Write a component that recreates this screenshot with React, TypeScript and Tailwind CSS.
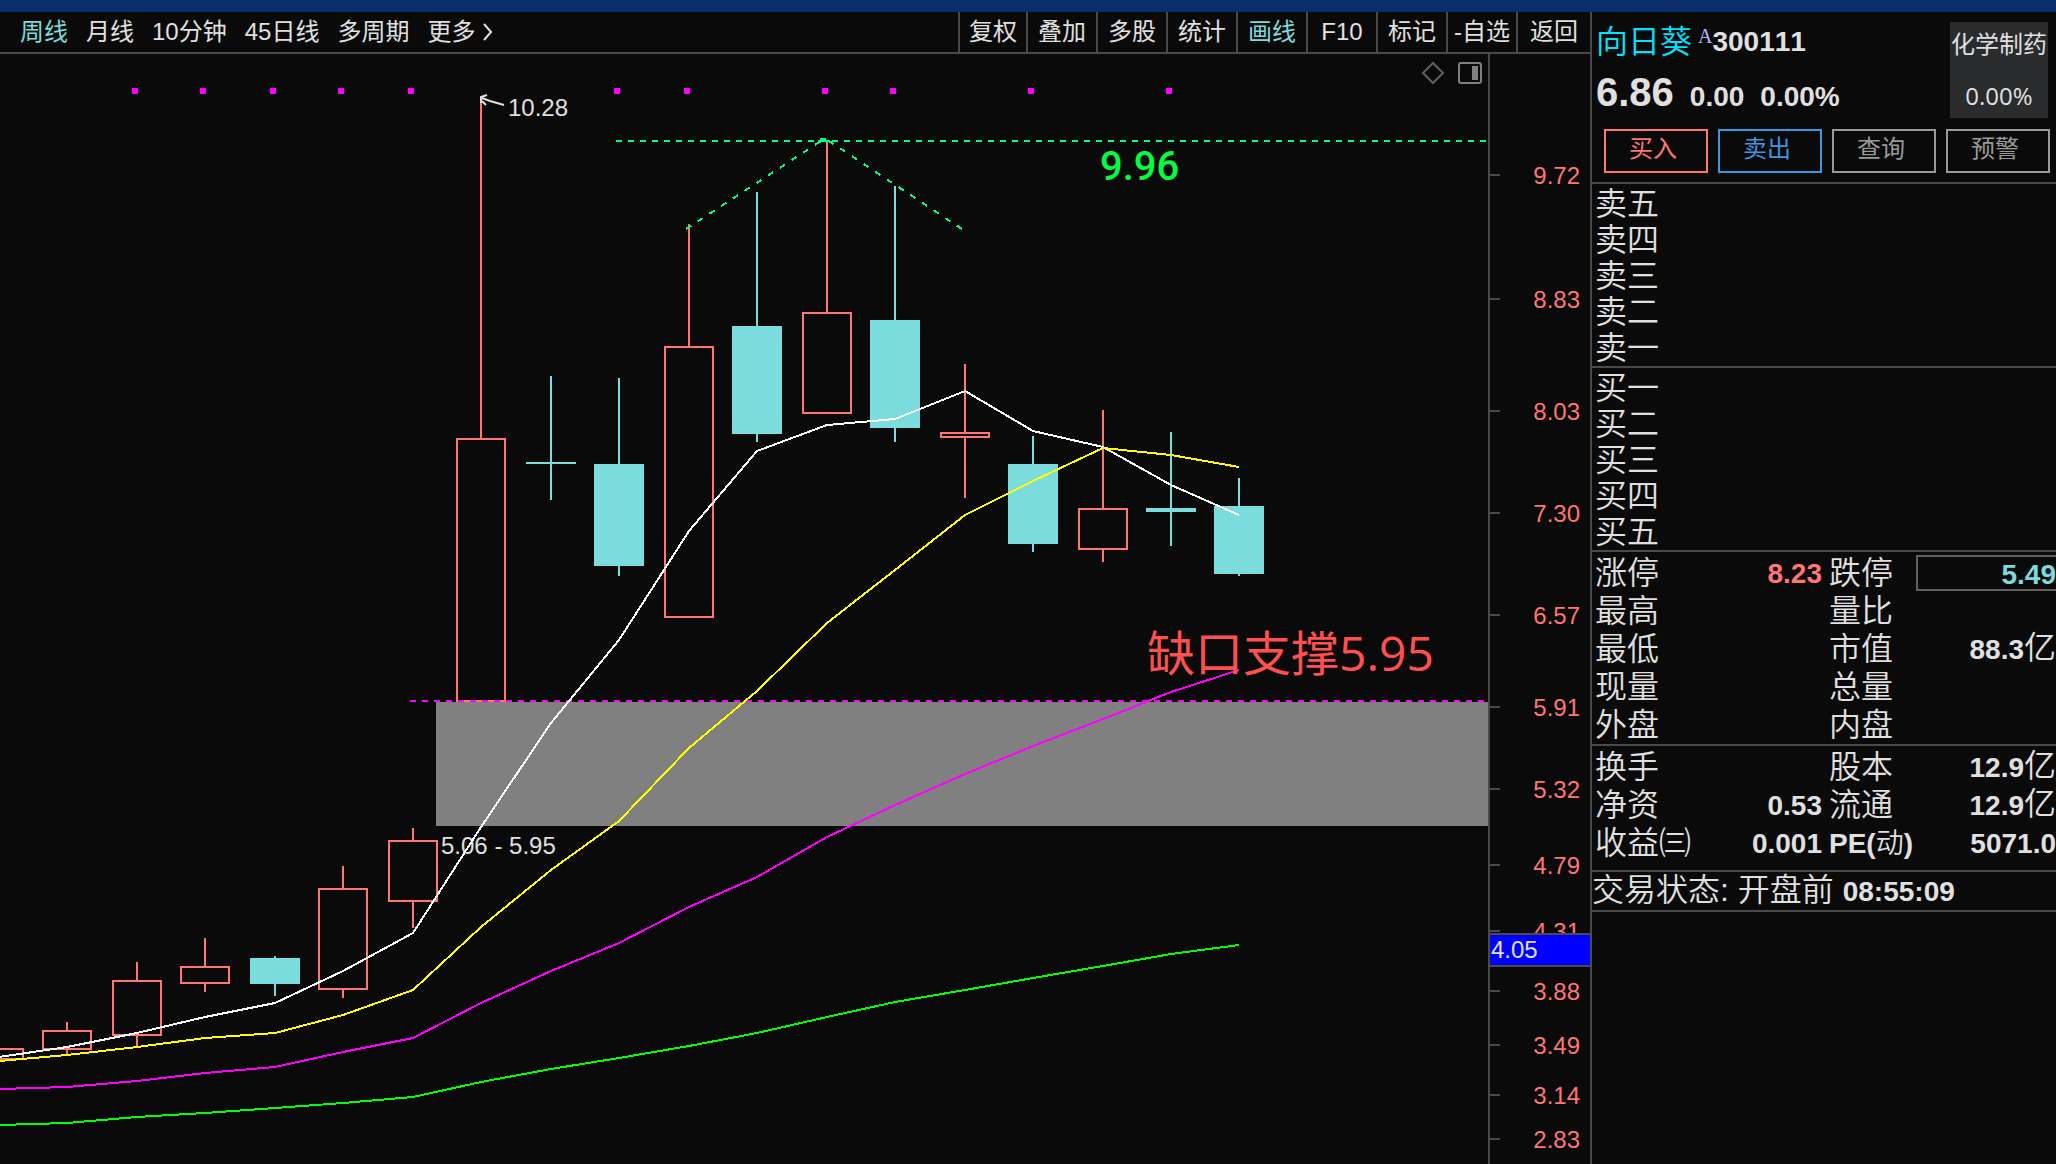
import { useState } from "react"

type Candle = {
  x: number
  high: number
  top: number
  bottom: number
  low: number
  up: boolean
}

const periods = ["周线", "月线", "10分钟", "45日线", "多周期", "更多"]
const tools = ["复权", "叠加", "多股", "统计", "画线", "F10", "标记", "-自选", "返回"]

const candles: Candle[] = [
  { x: -1, high: 1048, top: 1048, bottom: 1060, low: 1060, up: true },
  { x: 67, high: 1022, top: 1030, bottom: 1050, low: 1055, up: true },
  { x: 137, high: 962, top: 980, bottom: 1036, low: 1047, up: true },
  { x: 205, high: 938, top: 966, bottom: 984, low: 992, up: true },
  { x: 275, high: 956, top: 958, bottom: 984, low: 996, up: false },
  { x: 343, high: 866, top: 888, bottom: 990, low: 998, up: true },
  { x: 413, high: 828, top: 840, bottom: 902, low: 928, up: true },
  { x: 481, high: 102, top: 438, bottom: 702, low: 702, up: true },
  { x: 551, high: 376, top: 462, bottom: 464, low: 500, up: false },
  { x: 619, high: 378, top: 464, bottom: 566, low: 576, up: false },
  { x: 689, high: 224, top: 346, bottom: 618, low: 618, up: true },
  { x: 757, high: 192, top: 326, bottom: 434, low: 442, up: false },
  { x: 827, high: 142, top: 312, bottom: 414, low: 414, up: true },
  { x: 895, high: 186, top: 320, bottom: 428, low: 442, up: false },
  { x: 965, high: 364, top: 432, bottom: 438, low: 498, up: true },
  { x: 1033, high: 436, top: 464, bottom: 544, low: 552, up: false },
  { x: 1103, high: 410, top: 508, bottom: 550, low: 562, up: true },
  { x: 1171, high: 432, top: 508, bottom: 512, low: 546, up: false },
  { x: 1239, high: 478, top: 506, bottom: 574, low: 576, up: false },
]

// one y value per candle
const averages = [
  { color: "#ffffff", ys: [1057, 1047, 1033, 1017, 1003, 971, 933, 827, 723, 640, 531, 451, 425, 419, 391, 431, 447, 485, 515] },
  { color: "#ffff00", ys: [1061, 1055, 1047, 1038, 1033, 1015, 990, 927, 870, 821, 748, 691, 623, 570, 515, 481, 448, 455, 467] },
  { color: "#ff00ff", ys: [1089, 1087, 1081, 1073, 1067, 1052, 1038, 1003, 971, 943, 907, 877, 837, 805, 774, 746, 719, 692, 670] },
  { color: "#00ff00", ys: [1125, 1123, 1117, 1113, 1108, 1103, 1097, 1082, 1069, 1058, 1046, 1033, 1017, 1002, 990, 978, 966, 954, 945] },
]

const signals = [135, 203, 273, 341, 411, 617, 687, 825, 893, 1031, 1169]

const axis = [
  { label: "9.72", y: 175 },
  { label: "8.83", y: 299 },
  { label: "8.03", y: 411 },
  { label: "7.30", y: 513 },
  { label: "6.57", y: 615 },
  { label: "5.91", y: 707 },
  { label: "5.32", y: 789 },
  { label: "4.79", y: 865 },
  { label: "4.31", y: 931 },
  { label: "3.88", y: 991 },
  { label: "3.49", y: 1045 },
  { label: "3.14", y: 1095 },
  { label: "2.83", y: 1139 },
]

const orders = [
  { label: "买入", style: "border-[#ff7673] text-[#ff7673]" },
  { label: "卖出", style: "border-[#3d96e0] text-[#3d96e0]" },
  { label: "查询", style: "border-[#9a9a9a] text-[#9a9a9a]" },
  { label: "预警", style: "border-[#9a9a9a] text-[#9a9a9a]" },
]

const asks = ["卖五", "卖四", "卖三", "卖二", "卖一"]
const bids = ["买一", "买二", "买三", "买四", "买五"]

function Chart() {
  return (
    <svg viewBox="0 54 1590 1110" className="block w-full h-auto" role="img" aria-label="周线 K线图">
      {/* gap zone */}
      <rect x="436" y="702" width="1052" height="124" fill="#808080" />

      <g shapeRendering="crispEdges">
        {signals.map((x) => (
          <rect key={x} x={x - 3} y="88" width="6" height="6" fill="#ff00ff" />
        ))}

        {candles.map((c) => {
          const color = c.up ? "#ff7673" : "#7adcdc"
          return (
            <g key={c.x}>
              <rect x={c.x - 1} y={c.high} width="2" height={c.top - c.high} fill={color} />
              <rect x={c.x - 1} y={c.bottom} width="2" height={c.low - c.bottom} fill={color} />
              {c.up ? (
                <rect x={c.x - 24} y={c.top + 1} width="48" height={c.bottom - c.top - 2} fill="none" stroke={color} strokeWidth="2" />
              ) : (
                <rect x={c.x - 25} y={c.top} width="50" height={c.bottom - c.top} fill={color} />
              )}
            </g>
          )
        })}

        <path d="M616 141H1488" stroke="#00ff80" strokeWidth="2" strokeDasharray="6 6" />
        <path d="M686 229L821 141" stroke="#00ff80" strokeWidth="2" strokeDasharray="6 8" fill="none" />
        <path d="M962 229L829 141" stroke="#00ff80" strokeWidth="2" strokeDasharray="6 8" fill="none" />
        <path d="M820 138h6v2h4v2h-12v-2h2z" fill="#00ff80" />
        <path d="M410 701H1488" stroke="#ff00ff" strokeWidth="2" strokeDasharray="6 6" />
      </g>

      <g fontSize="24" fill="#e0e0e0">
        <text x="508" y="116">10.28</text>
        <text x="441" y="854">5.06 - 5.95</text>
      </g>
      <path d="M481 103V97L487 95M482 98L490 101L504 105M482 101L486 105" stroke="#e0e0e0" strokeWidth="2" fill="none" />

      {averages.map((line) => (
        <polyline
          key={line.color}
          points={line.ys.map((y, i) => `${candles[i].x},${y}`).join(" ")}
          fill="none"
          stroke={line.color}
          strokeWidth="2"
          shapeRendering="crispEdges"
        />
      ))}

      <text x="1100" y="180" fontSize="40" className="font-[Roboto] font-medium" fill="#00ff40">
        9.96
      </text>
      <text x="1147" y="671" fontSize="48" className="font-['Open_Sans','Noto_Sans_CJK_SC',sans-serif]" fill="#ff5050">
        缺口支撑5.95
      </text>

      {/* chart corner icons */}
      <path d="M1433 63L1443 73L1433 83L1423 73Z" fill="none" stroke="#606060" strokeWidth="2" />
      <rect x="1459" y="63" width="22" height="20" rx="2" fill="none" stroke="#808080" strokeWidth="2" />
      <rect x="1472" y="66" width="6" height="14" fill="#808080" />

      {/* price axis */}
      <rect x="1488" y="54" width="2" height="1110" fill="#4a4a4a" />
      {axis.map((t) => (
        <g key={t.label}>
          <rect x="1490" y={t.y - 1} width="10" height="2" fill="#4a4a4a" />
          <text x="1580" y={t.y + 9} fontSize="24" textAnchor="end" fill="#ff7673">
            {t.label}
          </text>
        </g>
      ))}
      <rect x="1490" y="933" width="100" height="34" fill="#4a4a4a" />
      <rect x="1490" y="935" width="100" height="30" fill="#0000ff" />
      <text x="1491" y="958" fontSize="24" fill="#e0e0e0">
        4.05
      </text>
    </svg>
  )
}

function Levels({ rows }: { rows: string[] }) {
  return (
    <ul className="border-b-2 border-[#4a4a4a] pt-0.5 pl-[3px]">
      {rows.map((row) => (
        <li key={row} className="h-9 leading-9">
          {row}
        </li>
      ))}
    </ul>
  )
}

function Value({ children }: { children?: string }) {
  if (!children) return null
  const hasUnit = children.endsWith("亿")
  return (
    <>
      <span className="text-[28px] font-bold">{children.replace("亿", "")}</span>
      {hasUnit && "亿"}
    </>
  )
}

function Stats({ rows }: { rows: string[][] }) {
  return (
    <table className="w-full table-fixed">
      <colgroup>
        <col className="w-[100px]" />
        <col className="w-[130px]" />
        <col className="w-[94px]" />
        <col />
      </colgroup>
      <tbody>
        {rows.map(([label, value, label2, value2]) => (
          <tr key={label} className="h-[38px] leading-9">
            <th className="p-0 pl-[3px] text-left font-[350] whitespace-nowrap">{label}</th>
            <td className={`p-0 text-right ${label === "涨停" ? "text-[#ff7673]" : ""}`}>
              <Value>{value}</Value>
            </td>
            <th className="p-0 pl-[7px] text-left font-[350] whitespace-nowrap">
              {label2 === "PE(动)" ? (
                <span className="text-[28px] font-bold">
                  PE(<span className="font-[350]">动</span>)
                </span>
              ) : (
                label2
              )}
            </th>
            <td className="p-0 text-right whitespace-nowrap">
              {label2 === "跌停" ? (
                <div className="h-9 border-2 border-r-0 border-[#606060] leading-8 text-[#7adcdc]">
                  <Value>{value2}</Value>
                </div>
              ) : (
                <Value>{value2}</Value>
              )}
            </td>
          </tr>
        ))}
      </tbody>
    </table>
  )
}

export default function App() {
  const [period, setPeriod] = useState("周线")
  const [tool, setTool] = useState("画线")

  return (
    <div className="flex min-h-screen flex-col overflow-hidden bg-[#0a0a0a] font-['Liberation_Sans','Noto_Sans_CJK_SC',sans-serif] text-[#e0e0e0]">
      <header className="h-3 bg-[#0b2e6b]" />
      <main className="flex flex-1">
        <section className="min-w-0 flex-1">
          <nav className="flex h-[42px] items-stretch justify-between border-b-2 border-[#4a4a4a] text-2xl whitespace-nowrap">
            <div className="flex items-center gap-[18px] pl-5">
              {periods.map((p) => (
                <button
                  key={p}
                  className={`flex items-center gap-2 ${p === period ? "text-[#7adcdc]" : ""}`}
                  onClick={() => setPeriod(p)}
                >
                  {p}
                  {p === "更多" && (
                    <svg width="10" height="18" viewBox="0 0 10 18" fill="none" stroke="currentColor" strokeWidth="2">
                      <path d="M1 1L8 9L1 17" />
                    </svg>
                  )}
                </button>
              ))}
            </div>
            <div className="flex">
              {tools.map((t) => (
                <button
                  key={t}
                  className={`w-[70px] border-l-2 border-[#4a4a4a] first:w-[68px] last:w-[74px] ${t === tool ? "text-[#7adcdc]" : ""}`}
                  onClick={() => setTool(t)}
                >
                  {t}
                </button>
              ))}
            </div>
          </nav>
          <Chart />
        </section>

        <aside className="w-[466px] shrink-0 border-l-2 border-[#4a4a4a] text-[32px] font-[350] [font-kerning:none]">
          <div className="h-[172px] border-b-2 border-[#4a4a4a]">
            <div className="flex justify-between pt-[10px] pr-2 pl-1">
              <div>
                <h1 className="flex h-10 items-center">
                  <span className="leading-10 text-[#00e5ff]">向日葵</span>
                  <sup className="top-0 ml-1.5 h-8 font-['Liberation_Serif'] text-xl leading-5 text-[#b4b4ff]">A</sup>
                  <span className="text-[28px] leading-10 font-bold">300111</span>
                </h1>
                <p className="mt-2 flex items-baseline gap-4 text-[28px] leading-[44px] font-bold">
                  <span className="text-[40px]">6.86</span>
                  <span>0.00</span>
                  <span>0.00%</span>
                </p>
              </div>
              <a
                href="#sector"
                className="flex h-24 w-[98px] flex-col items-center justify-between bg-[#2a2b2d] py-1.5 font-['Open_Sans','Noto_Sans_CJK_SC',sans-serif] text-2xl leading-8 font-normal whitespace-nowrap"
              >
                <span>化学制药</span>
                <span>0.00%</span>
              </a>
            </div>
            <div className="mt-[10px] flex gap-[10px] pl-3">
              {orders.map((o) => (
                <button key={o.label} className={`h-11 w-[104px] border-2 pr-1.5 pb-1 text-2xl leading-8 font-normal ${o.style}`}>
                  {o.label}
                </button>
              ))}
            </div>
          </div>

          <Levels rows={asks} />
          <Levels rows={bids} />

          <div className="border-b-2 border-[#4a4a4a] pt-0.5">
            <Stats
              rows={[
                ["涨停", "8.23", "跌停", "5.49"],
                ["最高", "", "量比", ""],
                ["最低", "", "市值", "88.3亿"],
                ["现量", "", "总量", ""],
                ["外盘", "", "内盘", ""],
              ]}
            />
          </div>
          <div className="border-b-2 border-[#4a4a4a] pt-0.5 pb-2">
            <Stats
              rows={[
                ["换手", "", "股本", "12.9亿"],
                ["净资", "0.53", "流通", "12.9亿"],
                ["收益㈢", "0.001", "PE(动)", "5071.0"],
              ]}
            />
          </div>
          <p className="h-10 border-b-2 border-[#4a4a4a] leading-9 whitespace-nowrap">
            交易状态: 开盘前 <span className="text-[28px] font-bold">08:55:09</span>
          </p>
        </aside>
      </main>
    </div>
  )
}
